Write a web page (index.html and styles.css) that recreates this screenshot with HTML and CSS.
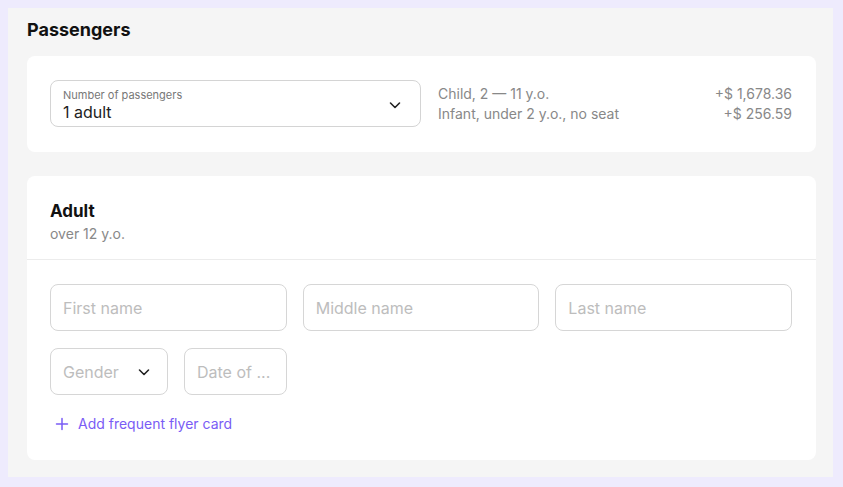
FILE: index.html
```html
<!DOCTYPE html>
<html lang="en">
<head>
    <meta charset="UTF-8">
    <title>Passengers</title>
    <link rel="stylesheet" href="styles.css">
</head>
<body>
    <div class="panel">
        <h2 class="panel-title">Passengers</h2>

        <div class="card card-count">
            <div class="select select-count">
                <div class="select-text">
                    <span class="select-label">Number of passengers</span>
                    <span class="select-value">1 adult</span>
                </div>
                <svg class="chevron" width="14" height="14" viewBox="0 0 14 14"><path d="M2.5 5l4.5 4.5L11.5 5" fill="none" stroke="#222" stroke-width="1.6" stroke-linecap="round" stroke-linejoin="round"/></svg>
            </div>
            <div class="fares">
                <div class="fare"><span>Child, 2 — 11 y.o.</span><span>+$ 1,678.36</span></div>
                <div class="fare"><span>Infant, under 2 y.o., no seat</span><span>+$ 256.59</span></div>
            </div>
        </div>

        <div class="card card-person">
            <div class="person-head">
                <div class="person-title">Adult</div>
                <div class="person-sub">over 12 y.o.</div>
            </div>
            <div class="person-body">
                <div class="row row-names">
                    <div class="field">First name</div>
                    <div class="field">Middle name</div>
                    <div class="field">Last name</div>
                </div>
                <div class="row">
                    <div class="field field-gender">
                        <span>Gender</span>
                        <svg class="chevron" width="14" height="14" viewBox="0 0 14 14"><path d="M2.5 5l4.5 4.5L11.5 5" fill="none" stroke="#222" stroke-width="1.6" stroke-linecap="round" stroke-linejoin="round"/></svg>
                    </div>
                    <div class="field field-date">Date of ...</div>
                </div>
                <a class="add-link" href="#">
                    <svg width="14" height="14" viewBox="0 0 14 14"><path d="M7 1.5v11M1.5 7h11" stroke="#7a5cf5" stroke-width="1.5" stroke-linecap="round"/></svg>
                    Add frequent flyer card
                </a>
            </div>
        </div>
    </div>
</body>
</html>
```

FILE: styles.css
```css
body {
    margin: 0;
    background-color: #eeebfd;
    font-family: Inter, "Noto Sans", Arial, sans-serif;
    color: #111;
}

.panel {
    margin: 8px 10px 10px 8px;
    padding: 11px 17px 17px 19px;
    background-color: #f5f5f5;
}

.panel-title {
    margin: 0 0 15px;
    font-size: 18px;
    line-height: 22px;
    font-weight: 700;
}

.card {
    background-color: #fff;
    border-radius: 8px;
}

.card-count {
    display: flex;
    align-items: center;
    padding: 24px 24px 25px 23px;
    margin-bottom: 24px;
}

.select {
    display: flex;
    align-items: center;
    justify-content: space-between;
    border: 1px solid #d4d4d4;
    border-radius: 8px;
    box-sizing: border-box;
}

.select-count {
    width: 371px;
    height: 47px;
    padding: 2px 18px 0 12px;
}

.select-text {
    display: flex;
    flex-direction: column;
}

.select-label {
    font-size: 11px;
    line-height: 14px;
    color: #777;
}

.select-value {
    font-size: 16px;
    line-height: 20px;
    color: #222;
}

.fares {
    flex: 1;
    margin-left: 17px;
    font-size: 14px;
    line-height: 20px;
    color: #888;
}

.fare {
    display: flex;
    justify-content: space-between;
}

.card-person {
    padding-bottom: 25px;
}

.person-head {
    padding: 24px 23px 16px;
    border-bottom: 1px solid #ececec;
}

.person-title {
    font-size: 17px;
    line-height: 22px;
    font-weight: 700;
}

.person-sub {
    margin-top: 3px;
    font-size: 14px;
    line-height: 18px;
    color: #888;
}

.person-body {
    padding: 24px 24px 0 23px;
}

.row {
    display: flex;
    gap: 16px;
    margin-bottom: 17px;
}

.field {
    display: flex;
    align-items: center;
    justify-content: space-between;
    box-sizing: border-box;
    height: 47px;
    padding: 0 12px;
    border: 1px solid #d6d6d6;
    border-radius: 8px;
    font-size: 16px;
    color: #bdbdbd;
}

.row-names .field {
    flex: 1;
}

.field-gender {
    width: 118px;
    padding-right: 16px;
}

.field-date {
    width: 103px;
}

.add-link {
    display: inline-flex;
    align-items: center;
    gap: 9px;
    margin: 2px 0 0 5px;
    font-size: 14px;
    line-height: 20px;
    color: #7a5cf5;
    text-decoration: none;
}
```
